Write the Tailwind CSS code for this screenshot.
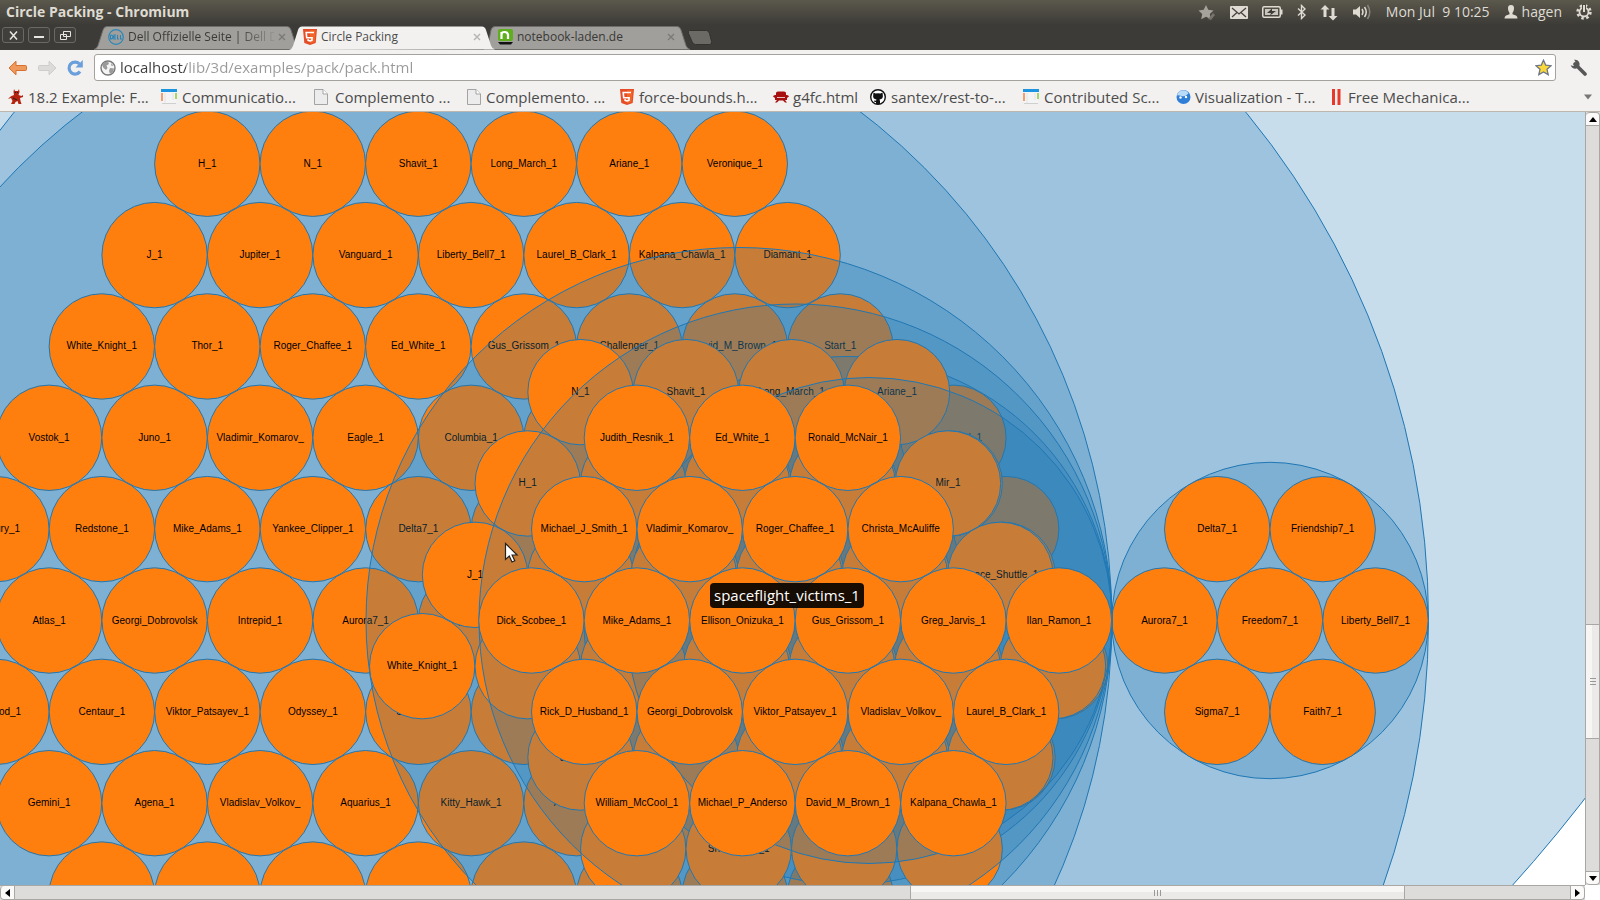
<!DOCTYPE html>
<html lang="en">
<head>
<meta charset="utf-8">
<title>Circle Packing</title>
<script src="https://cdn.jsdelivr.net/npm/@tailwindcss/browser@4"></script>
</head>
<body class="flex h-screen flex-col overflow-hidden bg-[#f2f1f0] font-['Open_Sans',sans-serif] text-[#4c4c4c]">

<svg class="hidden">
  <symbol id="html5" viewBox="0 0 14 16"><path d="M0 0h14l-1.3 14L7 16l-5.700-2z" fill="#e44d26"/><path d="M7 1.200h5.700l-1.100 11.800L7 14.600z" fill="#f16529"/><path d="M11 3.500H3.200l.5 5.200h5.400l-.2 2.600-1.900.6-1.900-.6-.1-1.200" fill="none" stroke="#fff" stroke-width="1.600"/></symbol>
  <symbol id="doc" viewBox="0 0 14 16"><path d="M.5.500h8.500l4.500 4.500v10.500H.500z" fill="#ececec" stroke="#a3a3a3"/><path d="M9 .500V5h4.500" fill="#fff" stroke="#a3a3a3"/></symbol>
  <symbol id="page" viewBox="0 0 16 16"><path d="M1 3h14v12H1z" fill="#f4f4f4"/><path d="M0 0h16v3H0z" fill="#1c94e0"/><path d="M1 4v8" stroke="#f0a070" stroke-width="2"/><path d="M4 4v10M12 4v7" stroke="#e4e4e4"/><path d="M15 4v6" stroke="#a6d66a" stroke-width="2"/><path d="M1 14.500h14" stroke="#cfcfcf"/></symbol>
</svg>

<header class="shrink-0 bg-linear-to-b from-[#5b584c] to-[#3c3b37] to-50%">
  <div class="flex h-[26px] items-center justify-between pr-2 pb-[2px] pl-[6px] text-[#dfdbd2]">
    <h1 class="text-[14px] leading-6 font-bold">Circle Packing - Chromium</h1>
    <div class="flex items-center gap-[14px] text-[14px] leading-6">
      <svg width="18" height="17" viewBox="0 0 18 17"><path d="M8 1l2.300 4.800 5.200.7-3.700 3.600 1 5.200L8 12.800l-4.800 2.500 1-5.200L.5 6.500l5.200-.7z" fill="#a5a29c"/><path d="M10 15l5-6 2 2-4 5z" fill="#77746d"/></svg>
      <svg width="18" height="13" viewBox="0 0 18 13"><rect width="18" height="13" rx="1" fill="#dfdbd2"/><path d="M2 2l7 6 7-6M2 11l5-4.500M16 11l-5-4.500" fill="none" stroke="#45433d" stroke-width="1.300"/></svg>
      <svg width="21" height="12" viewBox="0 0 21 12"><rect x=".75" y=".75" width="17.500" height="10.500" rx="1.500" fill="none" stroke="#dfdbd2" stroke-width="1.500"/><rect x="3" y="3" width="13" height="6" fill="#c9c5bc"/><path d="M19 3.500h1.500v5H19" fill="#dfdbd2"/><path d="M10 2.500L5 7h4l-1 2.500L14 5h-4z" fill="#3c3b37"/></svg>
      <svg width="9" height="16" viewBox="0 0 9 16"><path d="M1 4.500l7 6.500-3.500 3.500v-13L8 5l-7 6.500" fill="none" stroke="#dfdbd2" stroke-width="1.400"/></svg>
      <svg width="18" height="17" viewBox="0 0 18 17"><path d="M5 1L.5 5.500h3V13h3V5.500h3zM13 16.500l4.500-4.500h-3V4h-3v8h-3z" fill="#dfdbd2"/></svg>
      <svg width="20" height="16" viewBox="0 0 20 16"><path d="M1 5.500h3L8 2v12l-4-3.500H1z" fill="#dfdbd2"/><path d="M10 5q2 3 0 6M12.500 3q3.500 5 0 10" fill="none" stroke="#dfdbd2" stroke-width="1.500"/><path d="M15.500 1q4.500 7 0 14" fill="none" stroke="#88857c" stroke-width="1.500"/></svg>
      <span class="whitespace-pre">Mon Jul  9 10:25</span>
      <button class="flex items-center gap-1"><svg width="14" height="14" viewBox="0 0 14 14"><path d="M7 0c2.400 0 3.200 1.600 3 3.700C9.800 6 9 7 8.500 7.800v1.400L12 10.500q1.500.8 1.500 3H.5q0-2.200 1.500-3l3.500-1.300V7.800C5 7 4.200 6 4 3.700 3.800 1.600 4.600 0 7 0z" fill="#dfdbd2"/></svg>hagen</button>
      <svg width="16" height="16" viewBox="0 0 16 16"><circle cx="8" cy="8" r="6.400" fill="none" stroke="#dfdbd2" stroke-width="2.600" stroke-dasharray="2.500 2.526"/><circle cx="8" cy="8" r="4.500" fill="none" stroke="#dfdbd2" stroke-width="1.800"/><path d="M8 0v8" stroke="#4a4840" stroke-width="4"/><path d="M8 1v7" stroke="#dfdbd2" stroke-width="2"/></svg>
    </div>
  </div>

  <div class="flex h-6 items-start pl-[2px]">
    <div class="flex w-[92px] gap-1 pt-px">
      <button aria-label="Close" class="flex h-4 w-[22px] items-center justify-center rounded-[3px] border border-[#6b6963] bg-[#403f3b]"><svg width="9" height="9" viewBox="0 0 9 9"><path d="M1 .5l7 8M8 .5l-7 8" stroke="#e8e6e1" stroke-width="1.500"/></svg></button>
      <button aria-label="Minimize" class="flex h-4 w-[22px] items-center justify-center rounded-[3px] border border-[#6b6963] bg-[#403f3b]"><svg width="10" height="8" viewBox="0 0 10 8"><path d="M0 6h10" stroke="#e8e6e1" stroke-width="2"/></svg></button>
      <button aria-label="Restore" class="flex h-4 w-[22px] items-center justify-center rounded-[3px] border border-[#6b6963] bg-[#403f3b]"><svg width="11" height="9" viewBox="0 0 11 9"><path d="M3.500.500h7v5h-7zM.5 3.500h6v5h-6z" fill="none" stroke="#e8e6e1"/></svg></button>
    </div>
    <nav class="flex h-6 text-[12px] leading-5 text-[#3a3935]" aria-label="Tabs">
      <div class="relative flex h-6 w-[206px] items-center gap-1 pb-[2px] pl-[14px]">
        <svg class="absolute inset-0 h-full w-full" viewBox="0 0 206 24" preserveAspectRatio="none"><path d="M0 23.500q3-1 4-4L9 4q1-3.500 4-3.500h180q3 0 4 3.500l5 15.500q1 3 4 4z" fill="#a09f9c" stroke="#6f6d69"/></svg>
        <svg class="relative" width="16" height="16" viewBox="0 0 16 16"><circle cx="8" cy="8" r="7.300" fill="none" stroke="#2b86b8" stroke-width="1.200"/><path d="M2.500 6v4q2.500 0 2.500-2T2.500 6M8 6H6v4h2M6 8h2M9.500 6v4h1.500M12.500 6v4H14" fill="none" stroke="#2b86b8" stroke-width="1.100"/></svg>
        <button class="relative w-[146px] overflow-hidden bg-linear-to-r from-[#3a3935] from-75% to-[#3a3935]/10 bg-clip-text text-left whitespace-nowrap text-transparent">Dell Offizielle Seite | Dell D</button>
        <button aria-label="Close tab" class="relative"><svg width="8" height="8" viewBox="0 0 8 8"><path d="M1 1l6 6M7 1L1 7" stroke="#7b7a77" stroke-width="1.400"/></svg></button>
      </div>
      <div class="relative z-20 -ml-[11px] flex h-6 w-[206px] items-center gap-1 pb-[2px] pl-[14px]">
        <svg class="absolute inset-0 h-full w-full" viewBox="0 0 206 24" preserveAspectRatio="none"><path d="M0 24q3-1 4-4L9 4q1-3.500 4-3.500h180q3 0 4 3.500l5 15.500q1 3 4 4z" fill="#f2f1f0"/></svg>
        <svg class="relative" width="14" height="16"><use href="#html5"/></svg>
        <button aria-current="page" class="relative w-[148px] overflow-hidden text-left whitespace-nowrap text-[#4c4c4c]">Circle Packing</button>
        <button aria-label="Close tab" class="relative"><svg width="8" height="8" viewBox="0 0 8 8"><path d="M1 1l6 6M7 1L1 7" stroke="#b4b3b1" stroke-width="1.400"/></svg></button>
      </div>
      <div class="relative z-10 -ml-[11px] flex h-6 w-[206px] items-center gap-1 pb-[2px] pl-[14px]">
        <svg class="absolute inset-0 h-full w-full" viewBox="0 0 206 24" preserveAspectRatio="none"><path d="M0 23.500q3-1 4-4L7 4q1-3.500 4-3.500h182q3 0 4 3.500l5 15.500q1 3 4 4z" fill="#a09f9c" stroke="#6f6d69"/></svg>
        <svg class="relative" width="15" height="16" viewBox="0 0 15 16"><rect y="0" width="15" height="12" rx="2" fill="#5fae1e"/><path d="M3.500 3v7M3.500 5.500q0-2.500 3-2.500t3.500 2.500V10" fill="none" stroke="#fff" stroke-width="2.200"/><path d="M0 13h15l-2 2.500H2z" fill="#111"/></svg>
        <button class="relative w-[146px] overflow-hidden text-left whitespace-nowrap">notebook-laden.de</button>
        <button aria-label="Close tab" class="relative"><svg width="8" height="8" viewBox="0 0 8 8"><path d="M1 1l6 6M7 1L1 7" stroke="#7b7a77" stroke-width="1.400"/></svg></button>
      </div>
      <button aria-label="New tab" class="-ml-[3px] self-start pt-1"><svg width="26" height="15" viewBox="0 0 26 15"><path d="M2.500.500h17q2 0 3 3l2 8q.5 3-2 3h-14q-2.500 0-3.500-3l-3.500-8q-.8-3 1-3z" fill="#6c6a65" stroke="#33322f"/></svg></button>
    </nav>
  </div>
</header>

<div class="flex h-[35px] shrink-0 items-center gap-[10px] pr-[7px] pl-2">
  <button aria-label="Back" class="mr-px"><svg width="19" height="16" viewBox="0 0 19 16"><path d="M1 8l7-6.800v4.300h9.500q1 0 1 1v3q0 1-1 1H8v4.300z" fill="#ef9a5c" stroke="#d5702f"/></svg></button>
  <button aria-label="Forward"><svg width="19" height="16" viewBox="0 0 19 16"><path d="M18 8l-7-6.800v4.300H1.500q-1 0-1 1v3q0 1 1 1H11v4.300z" fill="#dddbd9" stroke="#cfcdca"/></svg></button>
  <button aria-label="Reload"><svg width="17" height="18" viewBox="0 0 17 18"><path d="M13 12.500A6 6 0 1 1 12.500 5" fill="none" stroke="#6a9fdb" stroke-width="3.200"/><path d="M15.800 1v7.500H8.500z" fill="#6a9fdb"/></svg></button>
  <form class="flex h-[27px] min-w-0 flex-1 items-center gap-1 rounded-[3px] border border-[#a5a19c] bg-white pr-[3px] pl-[5px]">
    <svg width="16" height="16" viewBox="0 0 16 16"><circle cx="8" cy="8" r="7" fill="#f4f4f4" stroke="#777" stroke-width="1.400"/><path d="M2 5q2-3.500 6-3.500L9 4 6.500 5.500 7.500 8 6 10 3.500 8zM10 8l4 .5q-.5 4-4 5.500L9 11zM11 3l2.500 2.500-2 .5z" fill="#9a9a9a"/></svg>
    <input aria-label="Address" type="text" value="localhost/lib/3d/examples/pack/pack.html" class="min-w-0 flex-1 bg-[linear-gradient(to_right,#3c3c3c_66px,#999_66px)] bg-clip-text pb-[2px] text-[15px] leading-6 text-transparent outline-none">
    <button type="button" aria-label="Bookmark this page"><svg width="17" height="17" viewBox="0 0 17 17"><path d="M8.500 1.200l2.200 4.900 5.300.6-4 3.600 1.200 5.300-4.700-2.700-4.700 2.700L5 10.300l-4-3.600 5.300-.6z" fill="#fbd83a" stroke="#6d7688" stroke-width="1.300"/></svg></button>
  </form>
  <button aria-label="Settings" class="mr-[6px] ml-1"><svg width="17" height="17" viewBox="0 0 17 17"><path d="M5 5L15 15" stroke="#575757" stroke-width="3.600" stroke-linecap="round"/><path d="M4 .8a4.500 4.500 0 1 1-3.300 5.500l2.600.7L5.600 5 5.200 2.200z" fill="#575757"/></svg></button>
</div>

<nav class="flex h-[27px] shrink-0 items-center gap-2 border-b border-[#bcb6ae] pr-2 pb-[3px] pl-2 text-[15px] leading-5 whitespace-nowrap" aria-label="Bookmarks">
  <a href="#" class="flex w-[145px] items-center gap-1"><svg width="16" height="16" viewBox="0 0 16 16"><path d="M6 0l1 2h3l1-2 .5 3-1 3 3 1 1.500-1v2l-3 1 .5 3 1 3h-3l-1-3-2 1-1 2H3l1.500-3L3 9l-3 1 2-2 1.500-1L6 6 5.500 3z" fill="#b5230f"/><path d="M7 3.500h1M9 3.500h1M5 9l4 2" stroke="#222"/></svg>18.2 Example: F...</a>
  <a href="#" class="flex w-[145px] items-center gap-[5px]"><svg width="16" height="16"><use href="#page"/></svg>Communicatio...</a>
  <a href="#" class="flex w-[145px] items-center gap-[7px]"><svg width="14" height="16"><use href="#doc"/></svg>Complemento ...</a>
  <a href="#" class="flex w-[145px] items-center gap-[5px]"><svg width="14" height="16"><use href="#doc"/></svg>Complemento. ...</a>
  <a href="#" class="flex w-[145px] items-center gap-[5px]"><svg width="14" height="16"><use href="#html5"/></svg>force-bounds.h...</a>
  <a href="#" class="flex w-[89px] items-center gap-1"><svg width="16" height="16" viewBox="0 0 16 16"><path d="M3 6V4q0-1.500 2-1.500h6q2 0 2 1.500v2q2.500-.5 3 1.500l-2 1.500v2H12l2 2.500h-2l-2-2H6l-2 2H2l2-2.500H2V9L0 7.500Q.5 5.500 3 6z" fill="#a81010"/><path d="M4 8.500h8" stroke="#f2f1f0" stroke-width=".8"/></svg>g4fc.html</a>
  <a href="#" class="flex w-[145px] items-center gap-[5px]"><svg width="16" height="16" viewBox="0 0 16 16"><circle cx="8" cy="8" r="7.300" fill="#fff" stroke="#111" stroke-width="1.400"/><path d="M3.500 3.500l2 1q2.500-.6 5 0l2-1 .3 2.500q.7 4-3.300 4.500l.5 1.500v3h-4v-2H4.500L4 11.500l2 .3.500-1.300Q2.500 10 3.200 6z" fill="#111"/></svg>santex/rest-to-...</a>
  <a href="#" class="flex w-[145px] items-center gap-[5px]"><svg width="16" height="16"><use href="#page"/></svg>Contributed Sc...</a>
  <a href="#" class="flex w-[145px] items-center gap-1"><svg width="15" height="16" viewBox="0 0 15 16"><circle cx="7.500" cy="8" r="7" fill="#2f7fd8"/><path d="M1 6.500Q2 1.500 7 1.200q4 0 5.500 3.300Q9 8 5.500 7T1 6.500z" fill="#b9dbf8"/><circle cx="4.500" cy="8.500" r="1.200" fill="#fff"/><circle cx="10" cy="8" r="1.200" fill="#fff"/></svg>Visualization - T...</a>
  <a href="#" class="flex w-[145px] items-center gap-[7px] pl-[3px]"><svg width="9" height="16" viewBox="0 0 9 16"><path d="M1.500 0v16M7 0v16" stroke="#e8382c" stroke-width="3"/></svg>Free Mechanica...</a>
  <button aria-label="More bookmarks" class="ml-auto"><svg width="8" height="6" viewBox="0 0 8 6"><path d="M0 .5h8L4 5.500z" fill="#777"/></svg></button>
</nav>

<div class="flex min-h-0 flex-1">
  <main class="relative min-w-0 flex-1 overflow-hidden bg-white">
    <svg id="chart" class="block h-full w-full font-['Liberation_Sans',sans-serif] text-[10px]" role="img" aria-label="Circle packing of spacecraft and crew"></svg>
    <div role="tooltip" class="absolute top-[471px] left-[710px] rounded bg-black/90 px-1 text-[15px] leading-[25px] text-white">spaceflight_victims_1</div>
    <svg class="absolute top-[430px] left-[504px]" width="15" height="22" viewBox="0 0 15 22"><path d="M1.500 1.500v16l3.800-3.500 2.700 6 2.800-1.200-2.700-5.800h5z" fill="#fff" stroke="#222" stroke-width="1.200"/></svg>
  </main>
  <div class="flex w-[15px] shrink-0 flex-col border-l border-[#a9a7a3] bg-[#dddcda]" role="scrollbar" aria-orientation="vertical" aria-controls="chart" aria-valuenow="77">
    <button aria-label="Scroll up" class="flex h-[14px] items-center justify-center rounded-t border border-l-0 border-[#a9a7a3] bg-[#fbfaf9]"><svg width="8" height="5"><path d="M0 5h8L4 0z"/></svg></button>
    <div class="grow-[498] basis-0 border-r border-[#a9a7a3]"></div>
    <div class="flex grow-[113] basis-0 flex-col items-center justify-center gap-[2px] border border-l-0 border-[#a9a7a3] bg-linear-to-r from-[#f7f6f5] from-50% to-[#ebeae8] to-50%"><i class="h-px w-[6px] bg-[#999]"></i><i class="h-px w-[6px] bg-[#999]"></i><i class="h-px w-[6px] bg-[#999]"></i></div>
    <div class="grow-[132] basis-0 border-r border-[#a9a7a3]"></div>
    <button aria-label="Scroll down" class="flex h-[14px] items-center justify-center rounded-b border border-l-0 border-[#a9a7a3] bg-[#fbfaf9]"><svg width="8" height="5"><path d="M0 0h8L4 5z"/></svg></button>
  </div>
</div>
<div class="flex h-[15px] shrink-0 bg-white">
  <div class="flex min-w-0 flex-1 border-t border-[#a9a7a3] bg-[#dddcda]" role="scrollbar" aria-orientation="horizontal" aria-controls="chart" aria-valuenow="84">
    <button aria-label="Scroll left" class="flex w-[15px] items-center justify-center rounded-l border border-t-0 border-[#a9a7a3] bg-[#fbfaf9]"><svg width="5" height="8"><path d="M5 0v8L0 4z"/></svg></button>
    <div class="grow-[896] basis-0 border-b border-[#a9a7a3]"></div>
    <div class="flex grow-[494] basis-0 items-center justify-center gap-[2px] border border-t-0 border-[#a9a7a3] bg-linear-to-b from-[#f7f6f5] from-50% to-[#ebeae8] to-50%"><i class="h-[6px] w-px bg-[#999]"></i><i class="h-[6px] w-px bg-[#999]"></i><i class="h-[6px] w-px bg-[#999]"></i></div>
    <div class="grow-[165] basis-0 border-b border-[#a9a7a3]"></div>
    <button aria-label="Scroll right" class="flex w-[15px] items-center justify-center rounded-r border border-t-0 border-[#a9a7a3] bg-[#fbfaf9]"><svg width="5" height="8"><path d="M0 0v8l5-4z"/></svg></button>
  </div>
  <div class="w-[15px] shrink-0"></div>
</div>

<script>
  // Each group: its enclosing circle, then hexagonally packed rows [row offset, first x, labels].
  const STEP = 105.5, ROW = 91.35, R = 52.7, MID = 508.5;
  const groups = [
    { x: 397, y: -231, r: 1501, rows: [] },
    { x: 630, y: MID, r: 798.5, rows: [] },
    { x: 1270, y: MID, r: 158.2, rows: [
      [-1, 1217.2, 'Delta7_1,Friendship7_1'],
      [0, 1164.5, 'Aurora7_1,Freedom7_1,Liberty_Bell7_1'],
      [1, 1217.2, 'Sigma7_1,Faith7_1']] },
    { x: 471.3, y: MID, r: 640.5, rows: [
      [-5, 207.3, 'H_1,N_1,Shavit_1,Long_March_1,Ariane_1,Veronique_1'],
      [-4, 154.6, 'J_1,Jupiter_1,Vanguard_1,Liberty_Bell7_1,Laurel_B_Clark_1,Kalpana_Chawla_1,Diamant_1'],
      [-3, 101.8, 'White_Knight_1,Thor_1,Roger_Chaffee_1,Ed_White_1,Gus_Grissom_1,Challenger_1,David_M_Brown_1,Start_1'],
      [-2, 49.1, 'Vostok_1,Juno_1,Vladimir_Komarov_,Eagle_1,Columbia_1,,,,'],
      [-1, -3.6, 'Mercury_1,Redstone_1,Mike_Adams_1,Yankee_Clipper_1,Delta7_1,,,,,'],
      [0, 49.1, 'Atlas_1,Georgi_Dobrovolsk,Intrepid_1,Aurora7_1,Apollo_1,,,,'],
      [1, -3.6, 'Voskhod_1,Centaur_1,Viktor_Patsayev_1,Odyssey_1,Salyut6_1,,,,,'],
      [2, 49.1, 'Gemini_1,Agena_1,Vladislav_Volkov_,Aquarius_1,Kitty_Hawk_1,Antares_1,,,'],
      [3, 101.8, ',,,,,,,']] },
    { x: 848, y: MID, r: 264, rows: [
      [-2, 742.4, ',,Early_Bird_1'], [-1, 689.7, ',,,Mir_1'], [0, 636.9, ',,,,'], [1, 689.7, ',,,'], [2, 742.4, ',,']] },
    { x: 739, y: MID, r: 373, rows: [
      [-2.5, 580.5, 'N_1,Shavit_1,Long_March_1,Ariane_1'],
      [-1.5, 527.7, 'H_1,,,,'],
      [-.5, 475, 'J_1,,,,,'],
      [.5, 422.2, 'White_Knight_1,,,,,,'],
      [1.5, 580.5, 'Jupiter_1,,,,'],
      [2.5, 633.2, ',Shenzhou7_1,,']] },
    { x: 869, y: MID, r: 243, rows: [
      [-1.5, 737, ',,Mir_1'], [-.5, 683.8, ',,,Space_Shuttle_1'], [.5, 736.5, ',,,'], [1.5, 789.3, ',,']] },
    { x: 795.5, y: MID, r: 316.5, rows: [
      [-2, 636.9, 'Judith_Resnik_1,Ed_White_1,Ronald_McNair_1'],
      [-1, 584.2, 'Michael_J_Smith_1,Vladimir_Komarov_,Roger_Chaffee_1,Christa_McAuliffe'],
      [0, 531.4, 'Dick_Scobee_1,Mike_Adams_1,Ellison_Onizuka_1,Gus_Grissom_1,Greg_Jarvis_1,Ilan_Ramon_1'],
      [1, 584.2, 'Rick_D_Husband_1,Georgi_Dobrovolsk,Viktor_Patsayev_1,Vladislav_Volkov_,Laurel_B_Clark_1'],
      [2, 636.9, 'William_McCool_1,Michael_P_Anderso,David_M_Brown_1,Kalpana_Chawla_1']] }
  ];
  const chart = document.getElementById('chart');
  function add(tag, attrs, text) {
    const el = document.createElementNS('http://www.w3.org/2000/svg', tag);
    for (const k in attrs) el.setAttribute(k, attrs[k]);
    if (text) el.textContent = text;
    chart.appendChild(el);
  }
  for (const g of groups) {
    add('circle', { cx: g.x, cy: g.y, r: g.r, class: 'fill-[#1f77b4] stroke-[#1f77b4] [fill-opacity:0.25]' });
    for (const [k, x0, labels] of g.rows) {
      labels.split(',').forEach((label, i) => {
        const x = x0 + i * STEP, y = g.y + k * ROW;
        add('circle', { cx: x, cy: y, r: R, class: 'fill-[#ff7f0e] stroke-[#1f77b4]' });
        if (label) add('text', { x: x, y: y + 3, 'text-anchor': 'middle', class: 'fill-black' }, label);
      });
    }
  }
</script>
</body>
</html>
